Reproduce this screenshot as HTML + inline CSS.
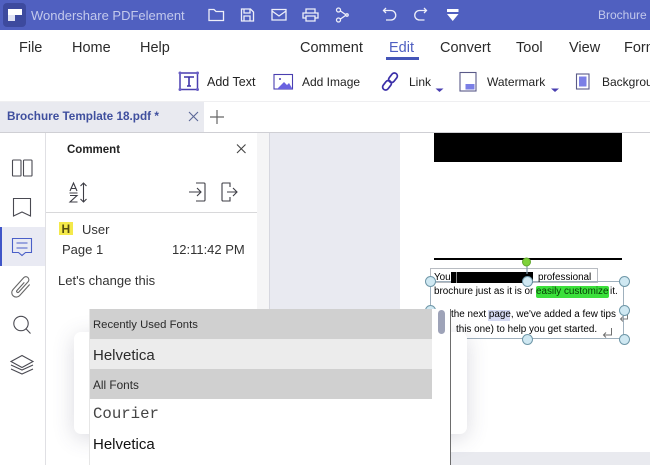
<!DOCTYPE html>
<html><head><meta charset="utf-8"><style>
html,body{margin:0;padding:0;width:650px;height:465px;overflow:hidden;background:#fff}
body{position:relative;font-family:"Liberation Sans",sans-serif;color:#222}
.a{position:absolute}
.t{position:absolute;white-space:nowrap;line-height:1}
svg{position:absolute;overflow:visible}
.ic{fill:none;stroke:#4a4a52;stroke-width:1.1}
.w{fill:none;stroke:#fff;stroke-width:1.3;opacity:.9}
.p{fill:none;stroke:#4a3fb0;stroke-width:1.5}
.m{font-size:14.5px;top:41px;color:#2a2a2a}
.h{position:absolute;width:9px;height:9px;border-radius:50%;background:#cfe8f2;border:1.3px solid #6f97a8;box-sizing:content-box}
.d{font-size:9.9px;color:#000}
</style></head><body>

<!-- title bar -->
<div class="a" style="left:0;top:0;width:650px;height:30px;background:#5060c0"></div>
<div class="a" style="left:3px;top:3px;width:23px;height:24px;background:#3d4a9e;border-radius:4px"></div>
<div class="a" style="left:8px;top:9px;width:14px;height:6px;background:#fff"></div>
<div class="a" style="left:8px;top:15px;width:7px;height:6px;background:#dfe2f4"></div>
<div class="t" style="left:31px;top:8.5px;font-size:13px;color:#c3c9ec">Wondershare PDFelement</div>
<svg style="left:0;top:0" width="650" height="30">
 <path class="w" d="M209 20.5V9.500h5l2 2h7.500v9z"/>
 <path class="w" d="M241.500 9h9l3 3v9h-12zM244 9v4h6V9M244 21v-5h6v5"/>
 <path class="w" d="M272 9.500h14v10.500h-14zM272 11l7 5 7-5"/>
 <path class="w" d="M306 13V9h9v4M306 18h-3v-5h15v5h-3M306 16h9v5h-9z"/>
 <circle class="w" cx="338.500" cy="10" r="2"/><circle class="w" cx="338.500" cy="20" r="2"/><circle class="w" cx="347" cy="15" r="1.200"/>
 <path class="w" d="M340.500 11l5 3.500M340.500 19l5-3.500"/>
 <path class="w" d="M386 8l-2.500 2.500 2.500 2.500M384 10.500h7a4.500 4.500 0 0 1 0 9.500h-5"/>
 <path class="w" d="M424 8l2.500 2.500-2.500 2.500M426 10.500h-6.500a4.500 4.500 0 0 0 0 9.500h5"/>
 <path d="M447 9h11.500v3h-11.500z M447 14h11.500l-5.750 7z" fill="#fff"/>
</svg>
<div class="t" style="left:598px;top:9px;font-size:12px;color:#c3c9ec">Brochure T</div>

<!-- menu -->
<div class="t m" style="left:19px">File</div>
<div class="t m" style="left:72px">Home</div>
<div class="t m" style="left:140px">Help</div>
<div class="t m" style="left:300px">Comment</div>
<div class="t m" style="left:389px;color:#4f5fc1">Edit</div>
<div class="a" style="left:386px;top:57px;width:33px;height:3px;background:#4455b8"></div>
<div class="t m" style="left:440px">Convert</div>
<div class="t m" style="left:516px">Tool</div>
<div class="t m" style="left:569px">View</div>
<div class="t m" style="left:624px">Form</div>

<!-- toolbar -->
<svg style="left:0;top:0" width="650" height="102">
 <rect class="p" x="180" y="73" width="17.500" height="16.500" stroke-width="1.100"/>
 <g fill="#6a5fc4"><circle cx="180" cy="73" r="1.500"/><circle cx="197.500" cy="73" r="1.500"/><circle cx="180" cy="89.500" r="1.500"/><circle cx="197.500" cy="89.500" r="1.500"/></g>
 <path d="M184 77h10M189 77v9M187 86h4" stroke="#3f34a8" stroke-width="1.600" fill="none"/>
 <rect x="274" y="74.500" width="18.500" height="14.500" fill="none" stroke="#4a3fb0" stroke-width="1.100"/>
 <path d="M277 89l7-7 3 3 2-2 3.500 6z" fill="#6a62e0"/><circle cx="280" cy="79" r="1" fill="#4a3fb0"/>
 <rect x="390" y="72.500" width="6" height="10.500" rx="3" fill="none" stroke="#3b2fa8" stroke-width="1.700" transform="rotate(38 393 77.750)"/>
 <rect x="384" y="80" width="6" height="10.500" rx="3" fill="none" stroke="#3b2fa8" stroke-width="1.700" transform="rotate(38 387 85.250)"/>
 <path d="M435.500 88.500h8l-4 3.500z" fill="#4a3fb0"/>
 <rect x="460" y="72.500" width="16" height="18.500" fill="none" stroke="#5a5a88" stroke-width="1.100"/>
 <rect x="465.500" y="84" width="9" height="5.500" fill="#7b7fe6"/>
 <path d="M551 88.500h8l-4 3.500z" fill="#4a3fb0"/>
 <rect x="576.500" y="74" width="12.500" height="15" fill="none" stroke="#5a5a88" stroke-width="1.100"/>
 <rect x="579" y="76.500" width="7.500" height="10" fill="#7b7fe6"/>
</svg>
<div class="t" style="left:207px;top:76px;font-size:12.500px">Add Text</div>
<div class="t" style="left:302px;top:76px;font-size:12px">Add Image</div>
<div class="t" style="left:409px;top:76px;font-size:12px">Link</div>
<div class="t" style="left:487px;top:76px;font-size:12px">Watermark</div>
<div class="t" style="left:602px;top:76px;font-size:12px">Background</div>

<!-- tab bar -->
<div class="a" style="left:0;top:101px;width:650px;height:1px;background:#efeff1"></div>
<div class="a" style="left:0;top:102px;width:204px;height:30px;background:#e9eaf0"></div>
<div class="a" style="left:0;top:132px;width:650px;height:1px;background:#cfcfd4"></div>
<div class="t" style="left:7px;top:111px;font-size:11.750px;font-weight:bold;color:#3f4f9e">Brochure Template 18.pdf *</div>
<svg style="left:0;top:100px" width="240" height="32">
 <path d="M189 12l9 9M198 12l-9 9" stroke="#5a6796" stroke-width="1.100" fill="none"/>
 <path d="M217 10v14M210 17h14" stroke="#666" stroke-width="1.200" fill="none"/>
</svg>

<!-- left sidebar -->
<div class="a" style="left:45px;top:133px;width:1px;height:332px;background:#e0e0e4"></div>
<div class="a" style="left:2px;top:227px;width:43px;height:39px;background:#e9eaf3"></div>
<div class="a" style="left:0;top:227px;width:2px;height:39px;background:#3f55c8"></div>
<svg style="left:0;top:133px" width="46" height="260">
 <g class="ic">
  <rect x="12.500" y="27" width="8.500" height="16" rx=".8"/><rect x="23.500" y="27" width="8.500" height="16" rx=".8"/>
  <path d="M13.500 65.500h17v17.500l-8.500-4-8.500 4z"/>
  <path d="M12.500 105.500h19v14h-6l-3.500 3-3.500-3h-6z" stroke="#4a5fc8"/><path d="M16.500 110h11M16.500 115h11" stroke="#4a5fc8"/>
  <g transform="rotate(42 22 154)" stroke="#666"><path d="M26 147V162a4.500 4.500 0 0 1-9 0V146a3 3 0 0 1 6 0V160a1.200 1.200 0 0 1-2.400 0V149"/></g>
  <circle cx="21" cy="190.500" r="7.200"/><path d="M26.200 196l4.300 4.500"/>
  <path d="M22 222.500l11 6-11 6-11-6z"/><path d="M11 232l11 5 11-5M11 236l11 5 11-5"/>
 </g>
</svg>

<!-- comment panel -->
<div class="t" style="left:67px;top:144.500px;font-size:11.500px;font-weight:bold;color:#222">Comment</div>
<svg style="left:46px;top:133px" width="212" height="85">
 <path d="M191 11.500l8.500 8.500M199.500 11.500l-8.500 8.500" stroke="#444" stroke-width="1.100" fill="none"/>
 <g fill="none" stroke="#3d3d45" stroke-width="1.100">
  <path d="M24 58l3.500-8 3.500 8M25.300 55.500h4.500M23.500 60h8M24 62.500h7l-7 6.500h7.500"/>
  <path d="M37.500 50v19M34.500 53l3-3 3 3M34.500 66l3 3 3-3"/>
  <path d="M143 59h12M151 55l4 4-4 4M150 50h8a1 1 0 0 1 1 1v16a1 1 0 0 1-1 1h-8"/>
  <path d="M184 54v-4h-7a1 1 0 0 0-1 1v16a1 1 0 0 0 1 1h7v-4M181 59h10M187 55l4 4-4 4"/>
 </g>
</svg>
<div class="a" style="left:46px;top:211.500px;width:211px;height:1px;background:#d8d8da"></div>
<div class="a" style="left:59px;top:222px;width:14px;height:13px;background:#f4e94a"></div>
<div class="t" style="left:61.500px;top:223px;font-size:12px;font-weight:bold;color:#554d10">H</div>
<div class="t" style="left:82px;top:223px;font-size:13px;color:#333">User</div>
<div class="t" style="left:62px;top:243px;font-size:13px;color:#333">Page 1</div>
<div class="t" style="left:172px;top:243px;font-size:13px;color:#333">12:11:42 PM</div>
<div class="t" style="left:58px;top:274px;font-size:13px;color:#333">Let's change this</div>

<!-- workspace -->
<div class="a" style="left:257px;top:133px;width:12px;height:332px;background:#f5f5f6"></div>
<div class="a" style="left:269px;top:133px;width:1px;height:332px;background:#d6d7df"></div>
<div class="a" style="left:270px;top:133px;width:130px;height:332px;background:#e9eaf1"></div>
<div class="a" style="left:450px;top:452px;width:200px;height:13px;background:#e9eaef"></div>

<!-- document -->
<div class="a" style="left:434px;top:133px;width:188px;height:29px;background:#000"></div>
<div class="a" style="left:434px;top:258px;width:188px;height:2px;background:#000"></div>
<div class="a" style="left:430px;top:268px;width:166px;height:13px;border:1px solid #b8bcc2"></div>
<div class="a" style="left:430px;top:281px;width:194px;height:58px;box-sizing:border-box;border:1.500px solid #9fb0bd"></div>
<div class="a" style="left:535.500px;top:286px;width:73.500px;height:11.500px;background:#3be03b;border-radius:2px"></div>
<div class="a" style="left:488px;top:310px;width:22px;height:10.500px;background:#d5daf3"></div>
<div class="a" style="left:451px;top:272px;width:82px;height:11px;background:#000"></div>
<div class="a" style="left:456px;top:272px;width:1px;height:11px;background:#8a8a8a"></div>
<div class="t d" style="left:434px;top:272.500px">You</div>
<div class="t d" style="left:538px;top:272.500px">professional</div>
<div class="t d" style="left:434px;top:287px">brochure just as it is or</div>
<div class="t d" style="left:536px;top:287px;color:#053d05">easily customize</div>
<div class="t d" style="left:610px;top:287px">it.</div>
<div class="t d" style="left:451px;top:310px">the next page, we've added a few tips</div>
<div class="t d" style="left:456px;top:325px">this one) to help you get started.</div>
<svg style="left:400px;top:240px" width="250" height="110">
 <path d="M127 26v8" stroke="#7f97a6" stroke-width="1.200"/>
 <circle cx="126.500" cy="22" r="4" fill="#7ed23a" stroke="#63a82e"/>
 <path d="M211.500 88V95H203.500M206 92.500l-2.500 2.500 2.500 2.500" fill="none" stroke="#6e6e6e" stroke-width="1"/>
 <path d="M227.500 73V79H220.500M223 76.500l-2.500 2.500 2.500 2.500" fill="none" stroke="#7c7c7c" stroke-width="1"/>
</svg>
<div class="h" style="left:425px;top:276px"></div>
<div class="h" style="left:522px;top:276px"></div>
<div class="h" style="left:619px;top:276px"></div>
<div class="h" style="left:425px;top:305px"></div>
<div class="h" style="left:619px;top:305px"></div>
<div class="h" style="left:522px;top:334px"></div>
<div class="h" style="left:619px;top:334px"></div>

<!-- dialog -->
<div class="a" style="left:74px;top:332px;width:393px;height:102px;background:#fff;border-radius:7px;box-shadow:0 4px 22px rgba(70,72,100,.2)"></div>

<!-- font popup -->
<div class="a" style="left:90px;top:309px;width:360px;height:156px;background:#fff;border-right:1.500px solid #6d6d6d;box-shadow:-1px 0 0 #e6e6e6"></div>
<div class="a" style="left:90px;top:309px;width:342px;height:30px;background:#d0d0d0"></div>
<div class="a" style="left:90px;top:339px;width:342px;height:30px;background:#ececec"></div>
<div class="a" style="left:90px;top:369px;width:342px;height:30px;background:#d0d0d0"></div>
<div class="a" style="left:437.500px;top:310px;width:7.500px;height:24px;background:#9ea3b8;border-radius:4px"></div>
<div class="t" style="left:93px;top:320px;font-size:11.300px;color:#2a2a2a">Recently Used Fonts</div>
<div class="t" style="left:93px;top:348px;font-size:15px;color:#2a2a2a">Helvetica</div>
<div class="t" style="left:93px;top:380px;font-size:11.800px;color:#2a2a2a">All Fonts</div>
<div class="t" style="left:93px;top:407px;font-size:15.700px;font-family:'Liberation Mono',monospace;color:#444">Courier</div>
<div class="t" style="left:93px;top:437px;font-size:15px;color:#111">Helvetica</div>
</body></html>
